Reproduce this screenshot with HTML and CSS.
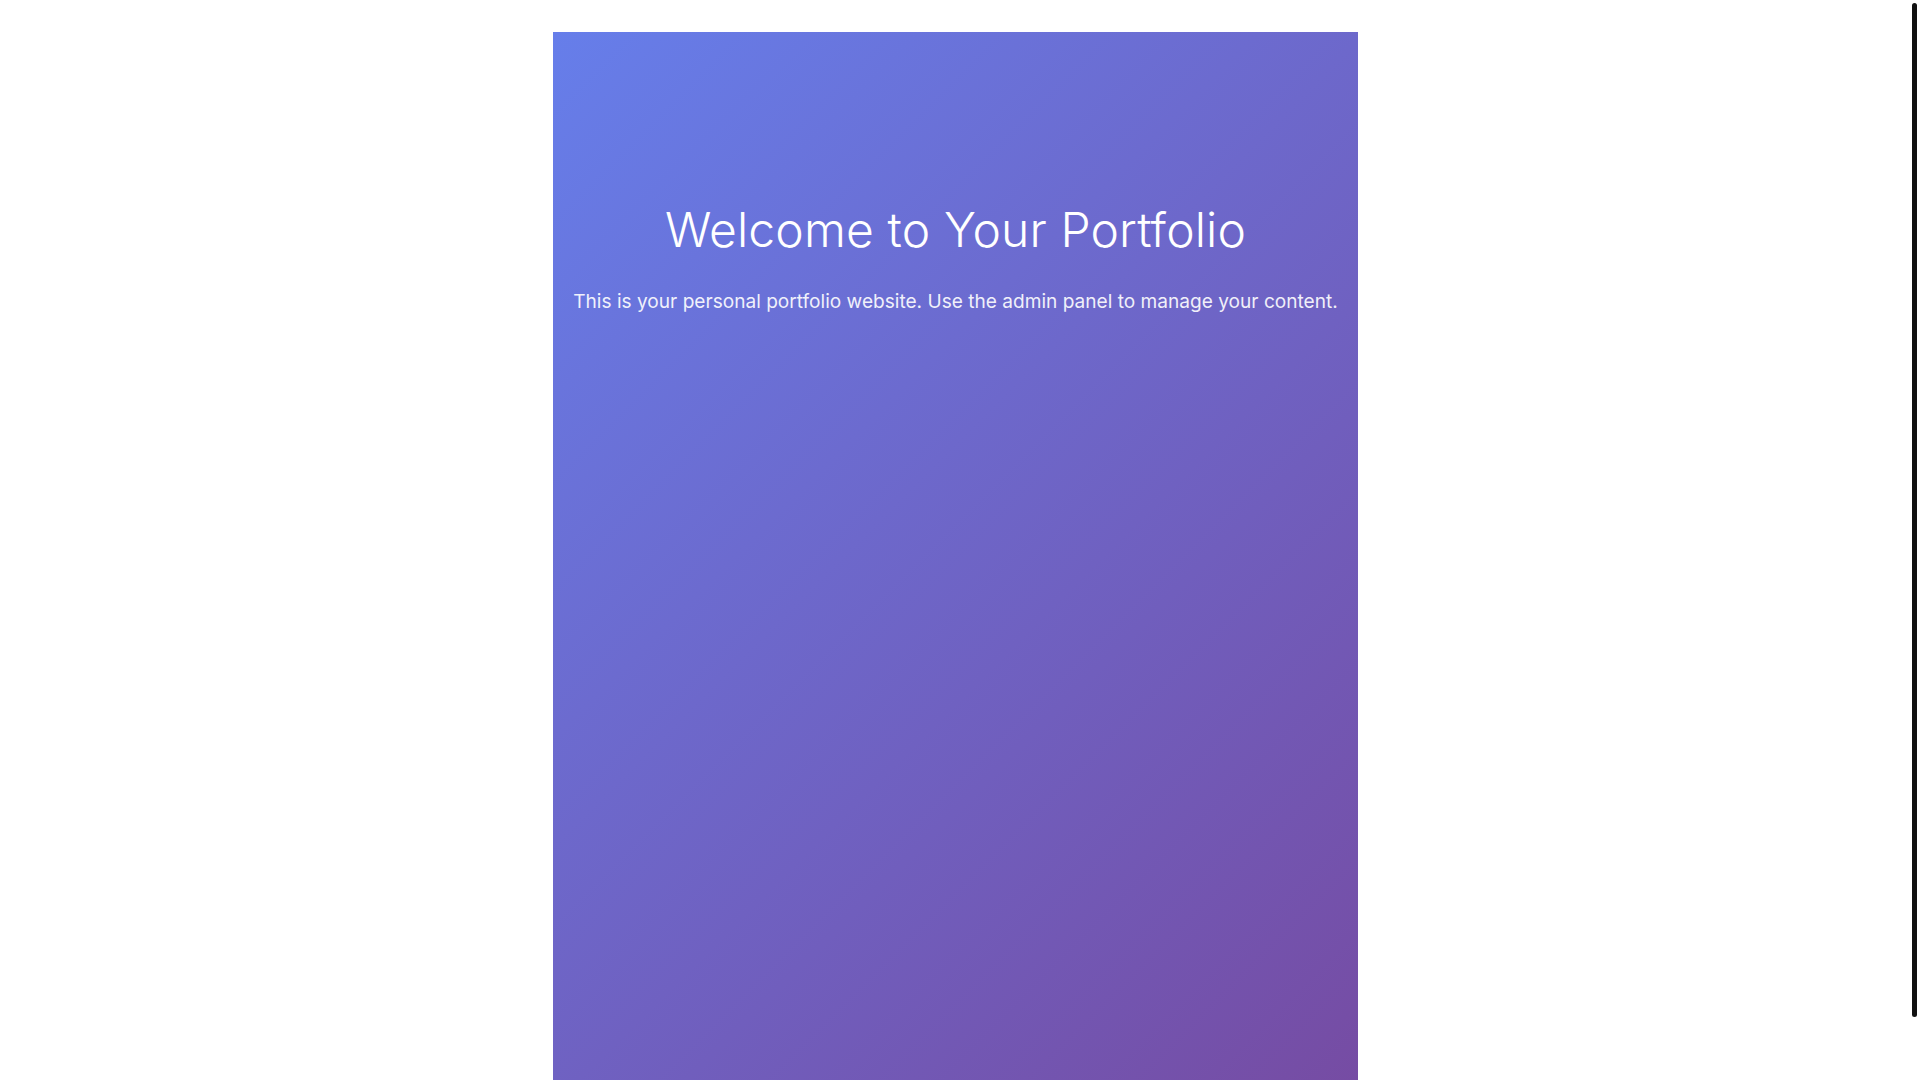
FILE: index.html
```html
<!DOCTYPE html>
<html lang="en">
<head>
<meta charset="utf-8">
<title>Portfolio</title>
<link rel="stylesheet" href="styles.css">
</head>
<body>
<main class="page">
  <section class="hero">
    <h1 class="hero-title">Welcome to Your Portfolio</h1>
    <p class="hero-text">This is your personal portfolio website. Use the admin panel to manage your content.</p>
  </section>
</main>
<div class="scroll-thumb" aria-hidden="true"></div>
</body>
</html>
```

FILE: styles.css
```css
* { box-sizing: border-box; }

html, body {
  margin: 0;
  padding: 0;
  background: #ffffff;
}

body {
  font-family: Inter, "Liberation Sans", Arial, sans-serif;
  color: #ffffff;
}

.page {
  display: flex;
  justify-content: center;
  padding: 32px 9px 32px 0;
}

.hero {
  min-height: 100vh;
  padding: 169px 20px 64px;
  background: linear-gradient(135deg, #667eea 0%, #764ba2 100%);
  text-align: center;
}

.hero-title {
  margin: 0 0 27px;
  font-size: 48px;
  font-weight: 300;
  line-height: 1.2;
  letter-spacing: 0.15px;
}

.hero-text {
  margin: 0;
  font-size: 19.1px;
  font-weight: 400;
  line-height: 1.6;
  opacity: 0.9;
}

.scroll-thumb {
  position: fixed;
  top: 3px;
  right: 3px;
  width: 5px;
  height: 1014px;
  background: #111111;
  border-radius: 3px;
}
```
